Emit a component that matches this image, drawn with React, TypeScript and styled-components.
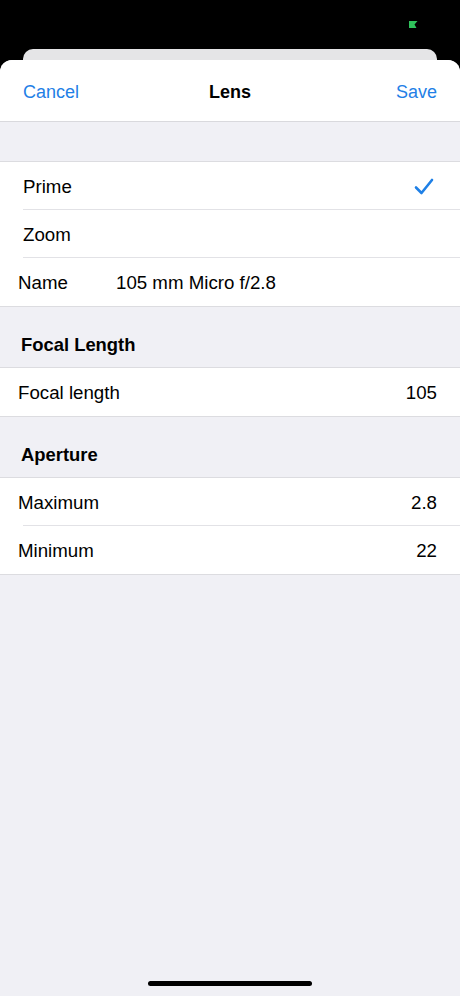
import styled, { createGlobalStyle } from "styled-components";

const Global = createGlobalStyle`
  html, body {
    margin: 0;
    padding: 0;
    background: #000;
  }
  body {
    font-family: "Liberation Sans", Arial, sans-serif;
    -webkit-font-smoothing: antialiased;
  }
`;

const Screen = styled.div`
  display: flex;
  flex-direction: column;
  width: 460px;
  height: 996px;
  background: #000;
  overflow: hidden;
`;

const StatusBar = styled.div`
  height: 49px;
  display: flex;
  justify-content: flex-end;
  padding: 20px 42px 0 0;
  box-sizing: border-box;
`;

const BackCard = styled.div`
  height: 11px;
  margin: 0 23px;
  background: #e5e5e7;
  border-radius: 10px 10px 0 0;
`;

const Sheet = styled.div`
  flex: 1;
  display: flex;
  flex-direction: column;
  background: #f0f0f5;
  border-radius: 12px 12px 0 0;
  overflow: hidden;
`;

const NavBar = styled.div`
  height: 62px;
  box-sizing: border-box;
  display: flex;
  align-items: center;
  justify-content: space-between;
  padding: 4px 23px 0;
  background: #fff;
  border-bottom: 1px solid #d9d9dd;
  font-size: 18px;
`;

const NavButton = styled.span<{ $right?: boolean }>`
  color: #1f80e6;
  width: 80px;
  text-align: ${(p) => (p.$right ? "right" : "left")};
`;

const Title = styled.span`
  font-weight: 700;
  color: #000;
`;

const Section = styled.div`
  background: #fff;
  border-top: 1px solid #dcdce0;
  border-bottom: 1px solid #dcdce0;
`;

const Row = styled.div<{ $inset?: number; $sep?: boolean }>`
  position: relative;
  height: 48px;
  display: flex;
  align-items: center;
  padding: 2px 23px 0 ${(p) => p.$inset ?? 18}px;
  box-sizing: border-box;
  font-size: 18.7px;
  color: #000;
  ${(p) =>
    p.$sep &&
    `
    &::after {
      content: "";
      position: absolute;
      left: 23px;
      right: 0;
      bottom: 0;
      height: 1px;
      background: #e2e2e6;
    }
  `}
`;

const Label = styled.span<{ $width?: number }>`
  flex: ${(p) => (p.$width ? `0 0 ${p.$width}px` : "1")};
`;

const Value = styled.span`
  margin-left: auto;
`;

const CheckWrap = styled.span`
  display: flex;
  margin-right: 3px;
`;

const Header = styled.div`
  height: 60px;
  box-sizing: border-box;
  padding: 27px 21px 0;
  font-size: 18.4px;
  font-weight: 700;
  line-height: 22px;
  color: #000;
`;

const Spacer = styled.div`
  height: 39px;
`;

const HomeBar = styled.div`
  margin: auto auto 10px;
  width: 164px;
  height: 5px;
  border-radius: 3px;
  background: #000;
`;

const Check = () => (
  <svg width="20" height="18" viewBox="0 0 20 18" fill="none">
    <path
      d="M2 9.5 L7.5 15 L18 2"
      stroke="#1f80e6"
      strokeWidth="2.6"
      strokeLinecap="round"
      strokeLinejoin="round"
    />
  </svg>
);

const Battery = () => (
  <svg width="10" height="9" viewBox="0 0 10 9">
    <polygon points="1,1 9.5,1 6.5,4.5 8.5,8 1,8" fill="#2fc25b" />
  </svg>
);

export default function App() {
  return (
    <Screen>
      <Global />
      <StatusBar>
        <Battery />
      </StatusBar>
      <BackCard />
      <Sheet>
        <NavBar>
          <NavButton>Cancel</NavButton>
          <Title>Lens</Title>
          <NavButton $right>Save</NavButton>
        </NavBar>
        <Spacer />
        <Section>
          <Row $inset={23} $sep>
            <Label>Prime</Label>
            <CheckWrap>
              <Check />
            </CheckWrap>
          </Row>
          <Row $inset={23} $sep>
            <Label>Zoom</Label>
          </Row>
          <Row>
            <Label $width={98}>Name</Label>
            <span>105 mm Micro f/2.8</span>
          </Row>
        </Section>
        <Header>Focal Length</Header>
        <Section>
          <Row>
            <Label>Focal length</Label>
            <Value>105</Value>
          </Row>
        </Section>
        <Header>Aperture</Header>
        <Section>
          <Row $sep>
            <Label>Maximum</Label>
            <Value>2.8</Value>
          </Row>
          <Row>
            <Label>Minimum</Label>
            <Value>22</Value>
          </Row>
        </Section>
        <HomeBar />
      </Sheet>
    </Screen>
  );
}
